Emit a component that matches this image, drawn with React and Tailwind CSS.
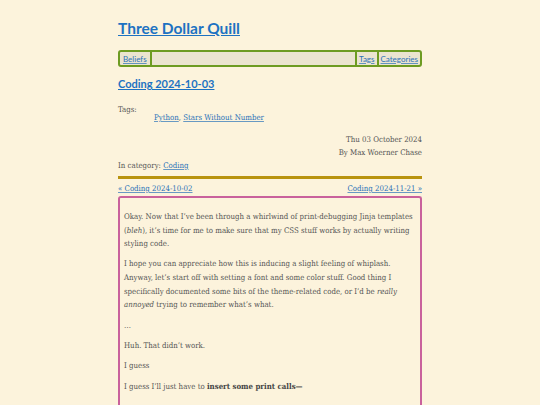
import React from 'react'

const heading = { fontFamily: 'Lato, "Open Sans", sans-serif' }

const linkCls = 'text-[#2a72b8] underline decoration-[#2a72b8]/70'

const Nav = () => (
  <nav
    className="mt-[9px] flex h-[17px] items-stretch rounded-[3px] border-2 border-[#6d9b22] bg-[#ebe4d0] text-[8px] leading-none"
    style={heading}
  >
    <a href="#" className={`${linkCls} flex items-center px-[3px]`}>Beliefs</a>
    <div className="flex-1 border-x-2 border-[#6d9b22]" />
    <a href="#" className={`${linkCls} flex items-center px-[2px]`}>Tags</a>
    <div className="w-[2px] bg-[#6d9b22]" />
    <a href="#" className={`${linkCls} flex items-center px-[2px]`}>Categories</a>
  </nav>
)

export default function App() {
  return (
    <div
      className="min-h-[405px] bg-[#fcf3dc] text-[#555555]"
      style={{ fontFamily: '"DejaVu Serif", "Liberation Serif", serif', fontStretch: 'condensed' }}
    >
      <div className="mx-auto w-[304px] pt-[15px]">
        <h1 className="text-[15.5px] font-bold leading-[26px]" style={heading}>
          <a href="#" className="text-[#1d72c2] underline">Three Dollar Quill</a>
        </h1>

        <Nav />

        <h2 className="mt-[8px] text-[11px] font-bold leading-[18px]" style={heading}>
          <a href="#" className="text-[#1d72c2] underline">Coding 2024-10-03</a>
        </h2>

        <div className="mt-[10px] text-[7.8px] leading-[13px]">
          <div>Tags:</div>
          <div className="-mt-[5px] pl-[36px]">
            <a href="#" className={linkCls}>Python</a>,{' '}
            <a href="#" className={linkCls}>Stars Without Number</a>
          </div>
        </div>

        <div className="mt-[9px] text-right text-[7.8px] leading-[13px]">
          <div>Thu 03 October 2024</div>
          <div>By Max Woerner Chase</div>
        </div>
        <div className="text-[7.8px] leading-[13px]">
          In category: <a href="#" className={linkCls}>Coding</a>
        </div>

        <div className="mt-[4px] h-[3px] bg-[#b8930f]" />

        <div className="mt-[3px] flex justify-between text-[7.8px] leading-[13px]">
          <a href="#" className={linkCls}>« Coding 2024-10-02</a>
          <a href="#" className={linkCls}>Coding 2024-11-21 »</a>
        </div>

        <article className="mt-[1px] rounded-t-[3px] border-2 border-b-0 border-[#c9619c] px-[4px] pt-[12px] pb-[20px] text-[7.8px] leading-[13.7px]">
          <p>
            Okay. Now that I’ve been through a whirlwind of print-debugging Jinja templates
            (<em>bleh</em>), it’s time for me to make sure that my CSS stuff works by actually
            writing styling code.
          </p>
          <p className="mt-[6px]">
            I hope you can appreciate how this is inducing a slight feeling of whiplash. Anyway,
            let’s start off with setting a font and some color stuff. Good thing I specifically
            documented some bits of the theme-related code, or I’d be <em>really annoyed</em>{' '}
            trying to remember what’s what.
          </p>
          <p className="mt-[7px]">…</p>
          <p className="mt-[6px]">Huh. That didn’t work.</p>
          <p className="mt-[7px]">I guess</p>
          <p className="mt-[7px]">
            I guess I’ll just have to <strong className="text-[#444]">insert some print calls—</strong>
          </p>
        </article>
      </div>
    </div>
  )
}
